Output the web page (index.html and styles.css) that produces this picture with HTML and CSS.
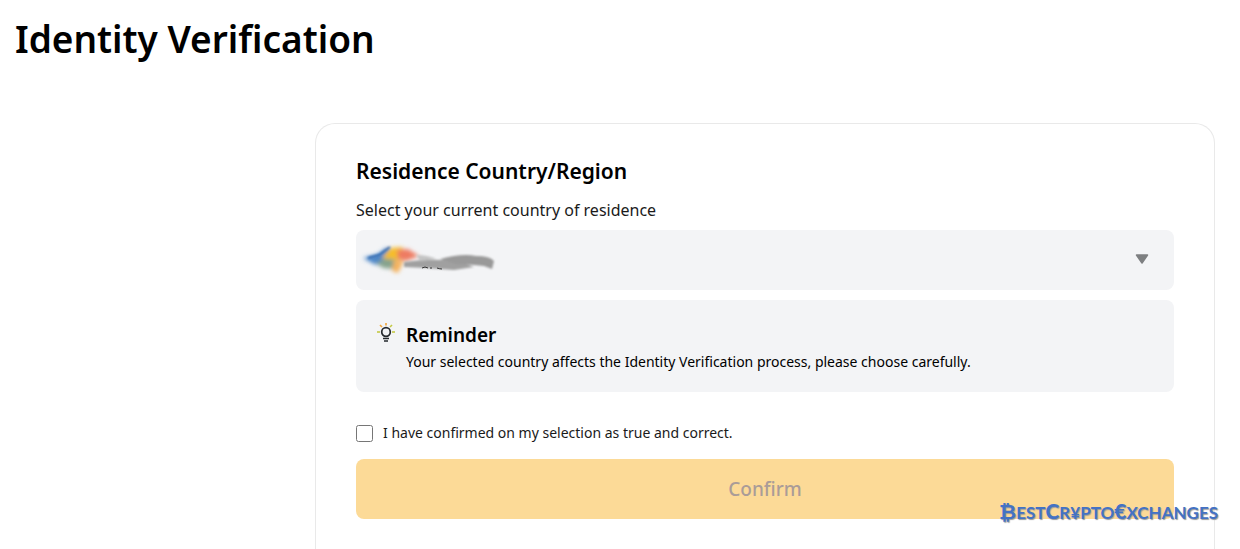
FILE: index.html
```
<!DOCTYPE html>
<html lang="en">
<head>
    <meta charset="UTF-8">
    <meta name="viewport" content="width=device-width, initial-scale=1.0">
    <title>Identity Verification</title>
    <link rel="stylesheet" href="styles.css">
</head>
<body>

    <h1 class="page-title">Identity Verification</h1>

    <form class="card">
        <h2 class="card-title">Residence Country/Region</h2>
        <label class="field-label" for="country">Select your current country of residence</label>

        <div class="select-box">
            <select id="country" name="country">
                <option value="" selected></option>
            </select>
            <!-- Blurred out flag and country name -->
            <svg class="smudge" width="150" height="46" viewBox="0 0 150 46" aria-hidden="true">
                <defs>
                    <filter id="soft" x="-20%" y="-40%" width="140%" height="180%">
                        <feGaussianBlur stdDeviation="2"/>
                    </filter>
                    <filter id="softer" x="-20%" y="-60%" width="140%" height="220%">
                        <feGaussianBlur stdDeviation="1"/>
                    </filter>
                </defs>
                <g filter="url(#soft)">
                    <path d="M7 24 L22 20 L30 14 L35 14 L28 24 L34 34 L18 30 Z" fill="#4c86c8"/>
                    <path d="M20 29 L30 24 L42 24 L38 35 L27 34 Z" fill="#86a38c"/>
                    <path d="M26 24 L34 14 L46 13 L50 20 L44 26 Z" fill="#f6bd2c"/>
                    <path d="M41 16 L52 15 L63 22 L50 27 L42 25 Z" fill="#ee7c62"/>
                    <path d="M38 26 L48 27 L42 39 L36 37 Z" fill="#f5b35f"/>
                </g>
                <path d="M12 24 L23 21 L34 13" fill="none" stroke="#2d68b0" stroke-width="2" filter="url(#softer)"/>
                <g filter="url(#softer)">
                    <path d="M48 28 Q70 25 88 26 L104 28 L118 33 L98 36 L70 34 L48 33 Z" fill="#a0a0a0"/>
                    <path d="M60 21 Q72 21 80 25 L64 27 Z" fill="#c4c4c4"/>
                    <path d="M84 25 Q106 19 120 22 Q134 22 138 27 L136 35 L128 32 L118 31 L100 30 Z" fill="#999"/>
                </g>
                <path d="M66 34 q3 -2 6 0 m2 0 h2 m5 0 q3 1 5 1" fill="none" stroke="#333" stroke-width="1"/>
            </svg>
            <svg class="caret" width="14" height="10" viewBox="0 0 14 10" aria-hidden="true">
                <path d="M1.5 1 H12.5 L7 9 Z" fill="#7d7f81" stroke="#7d7f81" stroke-width="1.5" stroke-linejoin="round"/>
            </svg>
        </div>

        <div class="reminder">
            <svg class="bulb" width="20" height="20" viewBox="0 0 20 20" aria-hidden="true">
                <g fill="none" stroke="#f2a63a" stroke-width="1.6">
                    <path d="M10 0 V2.500"/>
                    <path d="M4 2 L6 4"/>
                    <path d="M16 2 L14 4" stroke="#c3c944"/>
                    <path d="M1 9 H4" stroke="#c3c944"/>
                    <path d="M16 9 H19" stroke="#c3c944"/>
                </g>
                <circle cx="10" cy="9" r="4.300" fill="none" stroke="#25292e" stroke-width="1.700"/>
                <path d="M7 15.500 H13 M8 18 H12" stroke="#25292e" stroke-width="1.500"/>
            </svg>
            <div>
                <h3 class="reminder-title">Reminder</h3>
                <p class="reminder-text">Your selected country affects the Identity Verification process, please choose carefully.</p>
            </div>
        </div>

        <div class="agree">
            <input type="checkbox" id="agree" name="agree">
            <label for="agree">I have confirmed on my selection as true and correct.</label>
        </div>

        <button class="confirm" type="submit" disabled>Confirm</button>
    </form>

    <div class="watermark"><b>₿</b>EST<b>C</b>R¥PTO<b>€</b>XCHANGES</div>

</body>
</html>
```
FILE: styles.css
```
* {
    box-sizing: border-box;
}

body {
    display: flex;
    flex-direction: column;
    min-height: 100vh;
    margin: 0;
    padding: 12px 25px 0 15px;
    background-color: #fff;
    color: #000;
    font-family: "Segoe UI", "Noto Sans", sans-serif;
}

h1, h2, h3, p {
    margin: 0;
    font-weight: 600;
}

.page-title {
    font-size: 37px;
    line-height: 54px;
}

.card {
    flex: 1;
    margin: 57px 0 0 300px;
    padding: 31px 40px 24px;
    border: 1px solid #e9e9e9;
    border-bottom: none;
    border-radius: 20px 20px 0 0;
}

.card-title {
    font-size: 21px;
    line-height: 32px;
}

.field-label {
    display: block;
    margin: 10px 0 7px;
    font-size: 16px;
    line-height: 26px;
    color: #1a1a1a;
}

.select-box {
    position: relative;
}

.select-box select {
    display: block;
    width: 100%;
    height: 60px;
    padding: 0 48px 0 16px;
    border: none;
    border-radius: 8px;
    background-color: #f3f4f6;
    font: inherit;
    appearance: none;
}

.smudge {
    position: absolute;
    top: 4px;
    left: 0;
    pointer-events: none;
}

.caret {
    position: absolute;
    top: 24px;
    right: 25px;
    pointer-events: none;
}

.reminder {
    display: flex;
    gap: 10px;
    margin-top: 10px;
    padding: 20px;
    border-radius: 8px;
    background-color: #f3f4f6;
}

.bulb {
    flex: none;
    margin-top: 3px;
}

.reminder-title {
    font-size: 19px;
    line-height: 30px;
}

.reminder-text {
    padding-top: 2px;
    font-size: 14px;
    line-height: 20px;
    font-weight: 400;
}

.agree {
    display: flex;
    align-items: center;
    gap: 10px;
    margin: 29px 0 14px;
    font-size: 14px;
    line-height: 24px;
    color: #1a1a1a;
}

.agree input {
    width: 17px;
    height: 17px;
    margin: 0;
}

.confirm {
    width: 100%;
    height: 60px;
    border: none;
    border-radius: 8px;
    background-color: #fcda97;
    color: #aa9c98;
    font-family: inherit;
    font-size: 19px;
    font-weight: 500;
}

.watermark {
    position: absolute;
    right: 22px;
    bottom: 20px;
    font-family: "Lato", sans-serif;
    font-size: 17px;
    font-weight: 700;
    line-height: 32px;
    color: #4472c4;
    text-shadow: 1px 1px 1px #9a9a9a;
}

.watermark b {
    font-size: 21px;
}
```
